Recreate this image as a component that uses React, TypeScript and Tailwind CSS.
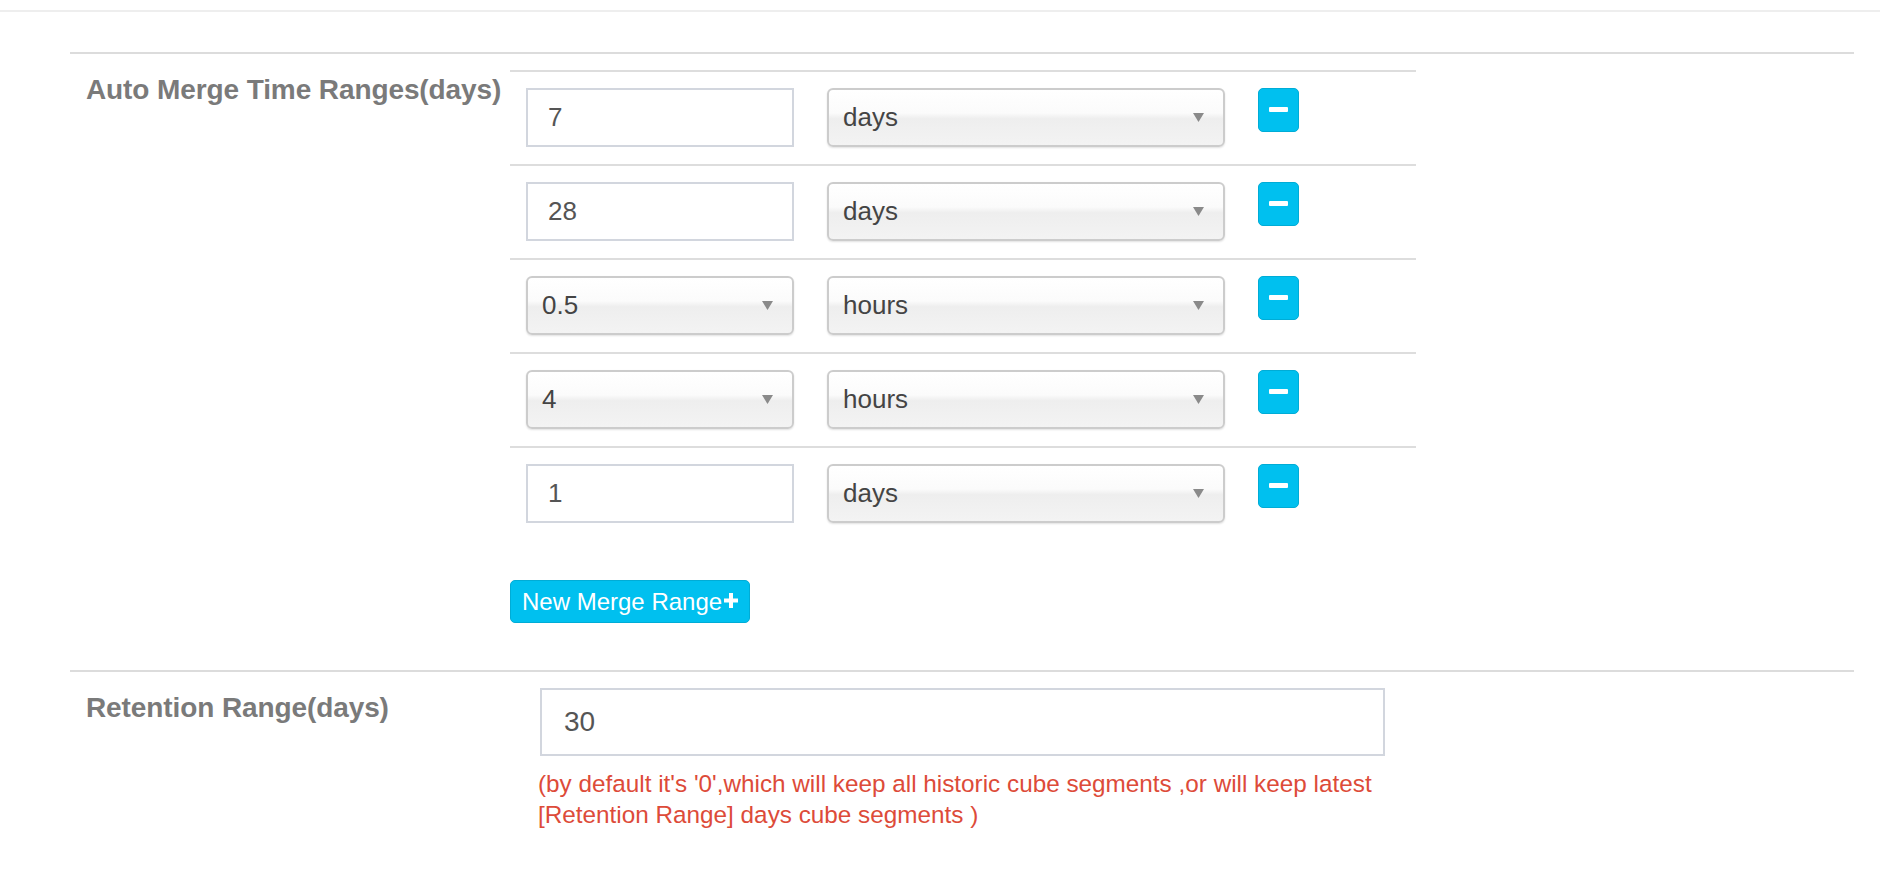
import React from 'react';

type MergeRow = { value: string; unit: string; dropdown?: boolean };

const mergeRows: MergeRow[] = [
  { value: '7', unit: 'days' },
  { value: '28', unit: 'days' },
  { value: '0.5', unit: 'hours', dropdown: true },
  { value: '4', unit: 'hours', dropdown: true },
  { value: '1', unit: 'days' },
];

const Caret = () => (
  <svg width="11" height="9" viewBox="0 0 11 9" className="shrink-0">
    <path d="M0 0H11L5.5 9Z" fill="#8a8a8a" />
  </svg>
);

const FakeSelect = ({ label, className }: { label: string; className: string }) => (
  <div
    className={`${className} h-[59px] flex items-center justify-between pl-[14px] pr-[19px] border-2 border-[#cccccc] rounded-[6px] bg-[linear-gradient(to_bottom,#ffffff_0%,#fbfbfb_42%,#eeeeee_52%,#f3f3f3_100%)] shadow-[0_1px_2px_rgba(0,0,0,0.12)] text-[26px] text-[#444]`}
  >
    <span>{label}</span>
    <Caret />
  </div>
);

const App = () => {
  return (
    <div className="min-h-[896px] bg-white pt-[10px] font-['Liberation_Sans',Arial,sans-serif]">
      {/* top rule */}
      <div className="h-[2px] bg-[#eeeeee]" />

      <div className="mt-[40px] pl-[70px] pr-[26px]">
        {/* Auto merge ranges */}
        <section className="border-t-2 border-[#dcdcdc] flex">
          <div className="w-[440px] shrink-0 pl-[16px] pt-[19px]">
            <label className="block text-[28px] leading-[34px] font-bold tracking-[-0.1px] text-[#7a7a7a]">
              Auto Merge Time Ranges(days)
            </label>
          </div>
          <div className="pt-[16px]">
            <div className="w-[906px]">
              {mergeRows.map((row, i) => (
                <div
                  key={i}
                  className="border-t-2 border-[#dddddd] pt-[16px] pb-[17px] pl-[16px] flex items-start gap-[33px]"
                >
                  {row.dropdown ? (
                    <FakeSelect label={row.value} className="w-[268px]" />
                  ) : (
                    <div className="w-[268px] h-[59px] border-2 border-[#d2d6de] bg-white flex items-center pl-[20px] text-[26px] text-[#555]">
                      {row.value}
                    </div>
                  )}
                  <FakeSelect label={row.unit} className="w-[398px]" />
                  <button className="w-[41px] h-[44px] rounded-[5px] bg-[#00c0ef] border border-[#00acd6] flex items-center justify-center">
                    <span className="block w-[19px] h-[5px] bg-white rounded-[1px] -mt-[1px]" />
                  </button>
                </div>
              ))}
            </div>
            <button className="mt-[40px] h-[43px] w-[240px] rounded-[5px] bg-[#00c0ef] border border-[#00acd6] flex items-center pl-[11px] text-[24px] text-white leading-none">
              New Merge Range
              <svg width="14" height="15" viewBox="0 0 14 15" className="ml-[2px] -mt-[2px]">
                <path d="M5 0H9V5.5H14V9.5H9V15H5V9.5H0V5.5H5Z" fill="#ffffff" />
              </svg>
            </button>
          </div>
        </section>

        {/* Retention */}
        <section className="mt-[47px] border-t-2 border-[#dcdcdc] flex">
          <div className="w-[470px] shrink-0 pl-[16px] pt-[19px]">
            <label className="block text-[28px] leading-[34px] font-bold tracking-[-0.1px] text-[#7a7a7a]">
              Retention Range(days)
            </label>
          </div>
          <div className="pt-[16px] w-[845px]">
            <div className="h-[68px] border-2 border-[#d2d6de] flex items-center pl-[22px] text-[28px] text-[#555]">
              30
            </div>
            <p className="mt-[12px] -ml-[2px] text-[24.3px] leading-[31px] text-[#dd4b39]">
              (by default it's '0',which will keep all historic cube segments ,or will keep latest [Retention Range] days cube segments )
            </p>
          </div>
        </section>
      </div>
    </div>
  );
};

export default App;
